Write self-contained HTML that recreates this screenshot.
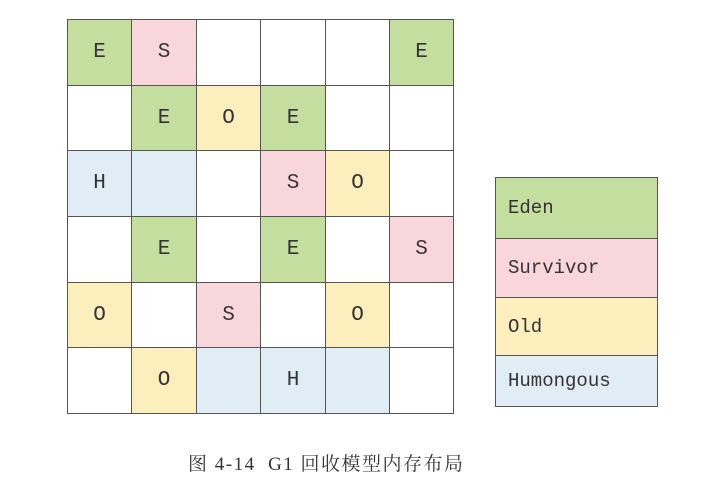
<!DOCTYPE html>
<html><head><meta charset="utf-8"><style>
body{margin:0;width:712px;height:482px;background:#fff;position:relative;overflow:hidden;font-family:"Liberation Serif","Noto Serif CJK SC",serif;}
.c{position:absolute;box-sizing:border-box;border:1px solid #555;display:flex;align-items:center;justify-content:center;font-size:21px;color:#333;font-family:"Liberation Mono",monospace;}
.g{background:#c4de9f}.p{background:#f9d6dc}.y{background:#fdefbd}.b{background:#e1edf5}.w{background:#fff}
.l{position:absolute;left:495px;width:163px;box-sizing:border-box;border:1px solid #555;font-family:"Liberation Mono",monospace;font-size:19px;color:#333;padding-left:12px;display:flex;align-items:center;}
.cap{position:absolute;left:188px;top:449px;font-size:19px;color:#333;white-space:pre;letter-spacing:1.5px;}
</style></head><body>
<div id="grid"></div>
<script>
var d=[["gE","pS","w","w","w","gE"],["w","gE","yO","gE","w","w"],["bH","b","w","pS","yO","w"],["w","gE","w","gE","w","pS"],["yO","w","pS","w","yO","w"],["w","yO","b","bH","b","w"]];
var xs=[67,131,196,260,325,389,453],ys=[19,85,150,216,282,347,413];
var h="";
for(var r=0;r<6;r++)for(var c=0;c<6;c++){var v=d[r][c];
h+='<div class="c '+v[0]+'" style="left:'+xs[c]+'px;top:'+ys[r]+'px;width:'+(xs[c+1]-xs[c]+1)+'px;height:'+(ys[r+1]-ys[r]+1)+'px">'+(v[1]||"")+'</div>';}
document.getElementById("grid").innerHTML=h;
</script>
<div class="l g" style="top:177px;height:62px">Eden</div>
<div class="l p" style="top:238px;height:60px">Survivor</div>
<div class="l y" style="top:297px;height:59px">Old</div>
<div class="l b" style="top:355px;height:52px">Humongous</div>
<div class="cap">图 4-14  G1 回收模型内存布局</div>
</body></html>
